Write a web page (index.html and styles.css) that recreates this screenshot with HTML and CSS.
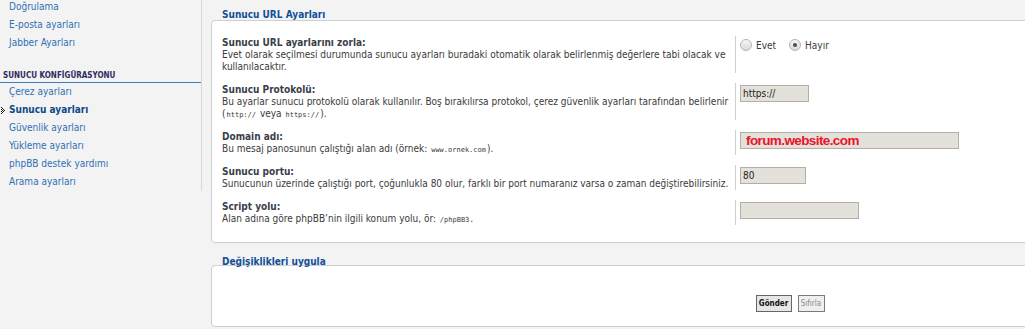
FILE: index.html
```html
<!DOCTYPE html>
<html lang="tr">
<head>
    <meta charset="UTF-8">
    <title>Sunucu ayarları</title>
    <link rel="stylesheet" href="styles.css">
</head>
<body>
    <div class="page">
        <div class="sidebar">
            <ul class="menu menu-top">
                <li><a href="#">Doğrulama</a></li>
                <li><a href="#">E-posta ayarları</a></li>
                <li><a href="#">Jabber Ayarları</a></li>
            </ul>
            <div class="menu-head">SUNUCU KONFİGÜRASYONU</div>
            <ul class="menu">
                <li><a href="#">Çerez ayarları</a></li>
                <li class="active">
                    <svg class="arrow" width="5" height="7" viewBox="0 0 5 7"><path d="M0 0h1v1H0zM0 2h1v1H0zM0 4h1v1H0zM0 6h1v1H0zM1 1h1v1H1zM1 3h1v1H1zM1 5h1v1H1zM2 2h1v1H2zM2 4h1v1H2zM3 3h1v1H3z" fill="#1a1a1a"/></svg>
                    <a href="#">Sunucu ayarları</a>
                </li>
                <li><a href="#">Güvenlik ayarları</a></li>
                <li><a href="#">Yükleme ayarları</a></li>
                <li><a href="#">phpBB destek yardımı</a></li>
                <li><a href="#">Arama ayarları</a></li>
            </ul>
        </div>

        <div class="main">
            <div class="panel-title">Sunucu URL Ayarları</div>
            <div class="panel">
                <div class="row">
                    <div class="label">
                        <b>Sunucu URL ayarlarını zorla:</b>
                        <span class="explain">Evet olarak seçilmesi durumunda sunucu ayarları buradaki otomatik olarak belirlenmiş değerlere tabi olacak ve kullanılacaktır.</span>
                    </div>
                    <div class="field radios">
                        <label class="radio"><span class="dot"></span>Evet</label>
                        <label class="radio checked"><span class="dot"></span>Hayır</label>
                    </div>
                </div>

                <div class="row">
                    <div class="label">
                        <b>Sunucu Protokolü:</b>
                        <span class="explain">Bu ayarlar sunucu protokolü olarak kullanılır. Boş bırakılırsa protokol, çerez güvenlik ayarları tarafından belirlenir (<code>http://</code> veya <code>https://</code>).</span>
                    </div>
                    <div class="field">
                        <input type="text" class="text w-proto" value="https://">
                    </div>
                </div>

                <div class="row">
                    <div class="label">
                        <b>Domain adı:</b>
                        <span class="explain">Bu mesaj panosunun çalıştığı alan adı (örnek: <code>www.ornek.com</code>).</span>
                    </div>
                    <div class="field">
                        <input type="text" class="text w-domain domain" value="forum.website.com">
                    </div>
                </div>

                <div class="row">
                    <div class="label">
                        <b>Sunucu portu:</b>
                        <span class="explain">Sunucunun üzerinde çalıştığı port, çoğunlukla 80 olur, farklı bir port numaranız varsa o zaman değiştirebilirsiniz.</span>
                    </div>
                    <div class="field">
                        <input type="text" class="text w-port" value="80">
                    </div>
                </div>

                <div class="row">
                    <div class="label">
                        <b>Script yolu:</b>
                        <span class="explain">Alan adına göre phpBB’nin ilgili konum yolu, ör: <code>/phpBB3</code>.</span>
                    </div>
                    <div class="field">
                        <input type="text" class="text w-path" value="">
                    </div>
                </div>
            </div>

            <div class="panel-title second">Değişiklikleri uygula</div>
            <div class="panel panel-submit">
                <div class="buttons">
                    <button class="btn btn-send">Gönder</button>
                    <button class="btn btn-reset">Sıfırla</button>
                </div>
            </div>
        </div>
    </div>
</body>
</html>
```

FILE: styles.css
```css
* {
    margin: 0;
    padding: 0;
    box-sizing: border-box;
}

body {
    background: #f3f3f3;
    font-family: "DejaVu Sans Condensed", "Liberation Sans", sans-serif;
    font-size: 10px;
    color: #333;
    overflow: hidden;
}

.page {
    display: flex;
    align-items: flex-start;
}

/* menu lateral */
.sidebar {
    width: 202px;
    flex-shrink: 0;
    border-right: 1px solid #d9d9d9;
}

.menu {
    list-style: none;
}

.menu-top {
    margin-top: -2px;
}

.menu li {
    position: relative;
    height: 18px;
    line-height: 18px;
    padding-left: 9px;
}

.menu a {
    color: #3170b4;
    text-decoration: none;
}

.menu li.active a {
    color: #0f4a86;
    font-weight: bold;
}

.arrow {
    position: absolute;
    left: 1px;
    top: 6px;
}

.menu-head {
    margin-top: 18px;
    height: 13px;
    line-height: 12px;
    padding-left: 3px;
    font-size: 8px;
    font-weight: bold;
    color: #2e2d5e;
    border-bottom: 1px solid #3d7ebf;
}

/* contenido */
.main {
    width: 1158px;
    flex-shrink: 0;
    margin-left: 9px;
    padding-top: 9px;
}

.panel-title {
    position: relative;
    padding-left: 11px;
    margin-bottom: -1px;
    height: 12px;
    line-height: 12px;
    font-weight: bold;
    color: #115098;
}

.panel-title.second {
    margin-top: 13px;
    margin-bottom: -3px;
}

.panel {
    background: #fff;
    border: 1px solid #cfcfcf;
    border-radius: 4px;
    padding: 15px 10px 17px;
}

.row {
    display: flex;
    margin-bottom: 10px;
}

.row:last-child {
    margin-bottom: 0;
}

.label {
    width: 513px;
    flex-shrink: 0;
    line-height: 12px;
    padding-top: 1px;
}

.label b {
    display: block;
    color: #3a3f4a;
}

.explain {
    color: #3a3a3a;
}

code {
    font-family: "DejaVu Sans Mono", monospace;
    font-size: 7px;
    line-height: 1;
    margin: 0 1px;
}

.field {
    border-left: 1px solid #cfcfcf;
    padding: 2px 0 0 4px;
}

.text {
    display: block;
    height: 17px;
    background: #e4e1da;
    border: 1px solid #b3afa7;
    padding: 0 2px;
    font-family: "DejaVu Sans Condensed", "Liberation Sans", sans-serif;
    font-size: 10px;
    color: #222;
    outline: none;
}

.w-proto { width: 69px; }
.w-domain { width: 219px; }
.w-port { width: 66px; }
.w-path { width: 119px; }

.text.domain {
    padding-left: 5px;
    font-family: "Liberation Sans", sans-serif;
    font-size: 13.5px;
    font-weight: bold;
    letter-spacing: -0.6px;
    color: #e8142c;
}

.radios {
    display: flex;
    align-items: flex-start;
    padding-top: 3px;
}

.radio {
    display: flex;
    align-items: center;
    gap: 4px;
    margin-right: 13px;
    color: #3d3d3d;
}

.dot {
    position: relative;
    width: 12px;
    height: 12px;
    border-radius: 50%;
    border: 1px solid #b4b4b4;
    background: linear-gradient(#f6f6f6, #d9d9d9);
}

.radio.checked .dot::after {
    content: "";
    position: absolute;
    left: 3px;
    top: 3px;
    width: 4px;
    height: 4px;
    border-radius: 50%;
    background: #4d4d4d;
}

.panel-submit {
    padding: 29px 10px 14px;
}

.buttons {
    display: flex;
    justify-content: center;
    gap: 6px;
}

.btn {
    height: 17px;
    font-family: "DejaVu Sans Condensed", "Liberation Sans", sans-serif;
    font-size: 8px;
    border: 1px solid #666;
    cursor: pointer;
}

.btn-send {
    width: 36px;
    background: #e6e6e6;
    color: #111;
    font-weight: bold;
}

.btn-reset {
    width: 27px;
    background: #efefef;
    color: #8a8a8a;
    border-color: #7a7a7a;
}
```
